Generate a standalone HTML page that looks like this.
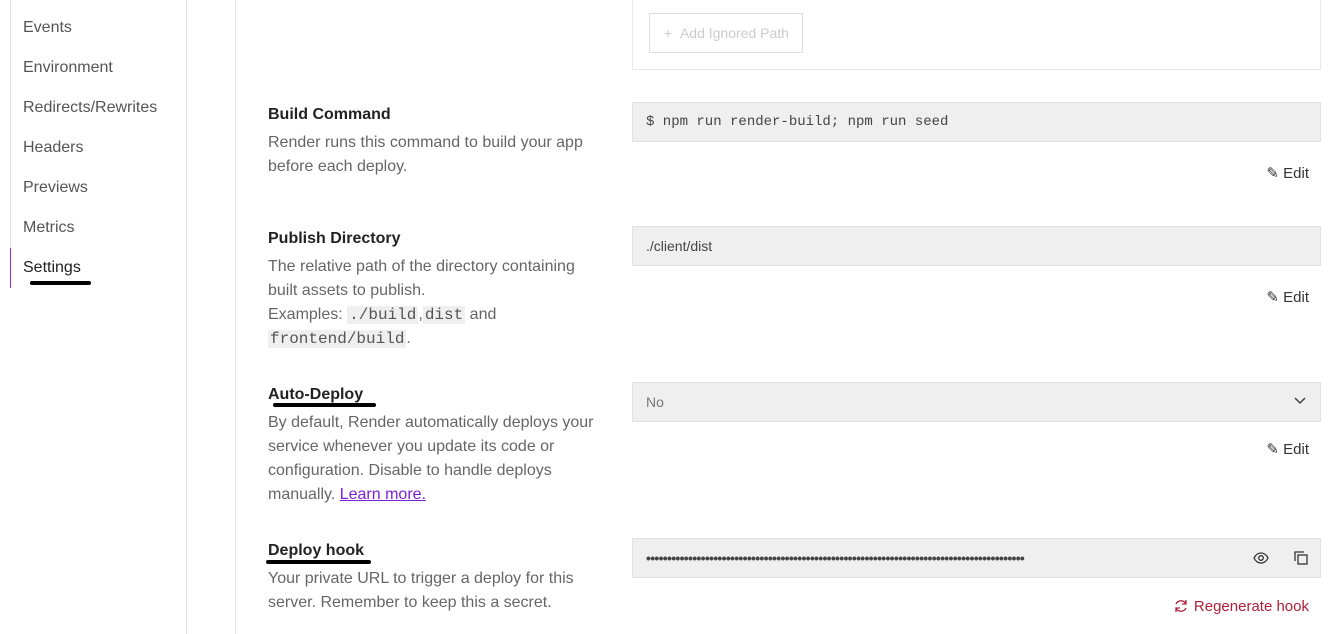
<!DOCTYPE html>
<html><head><meta charset="utf-8"><style>
*{margin:0;padding:0;box-sizing:border-box}
body{width:1328px;height:634px;overflow:hidden;background:#fff;font-family:"Liberation Sans",sans-serif;position:relative;color:#555}
.a{position:absolute;white-space:nowrap}
.nav{left:23px;font-size:16px;color:#555;line-height:20px}
.h{left:268px;font-size:16px;font-weight:bold;color:#222;line-height:20px}
.p{left:268px;font-size:16px;color:#666;line-height:24px}
.box{position:absolute;left:632px;width:689px;height:40px;background:#efefef;border:1px solid #e3e3e3;font-size:14px;color:#444;padding:0 13px;line-height:38px}
.edit{right:19px;font-size:15px;color:#333;line-height:20px}
code{font-family:"Liberation Mono",monospace;background:#efefef;font-size:16px;color:#555;padding:0 2px}
.mark{position:absolute;height:4px;background:#000;border-radius:3px}
</style></head><body>
<div style="position:absolute;left:10px;top:0;width:1px;height:248px;background:#e5e5e5"></div>
<div style="position:absolute;left:10px;top:248px;width:1px;height:40px;background:#8a2be2"></div>
<div style="position:absolute;left:186px;top:0;width:1px;height:634px;background:#e5e5e5"></div>
<div style="position:absolute;left:235px;top:0;width:1px;height:634px;background:#e5e5e5"></div>
<div class="a nav" style="top:18px">Events</div>
<div class="a nav" style="top:58px">Environment</div>
<div class="a nav" style="top:98px">Redirects/Rewrites</div>
<div class="a nav" style="top:138px">Headers</div>
<div class="a nav" style="top:178px">Previews</div>
<div class="a nav" style="top:218px">Metrics</div>
<div class="a nav" style="top:258px;color:#222">Settings</div>
<div class="mark" style="left:30px;top:281px;width:61px"></div>

<div style="position:absolute;left:632px;top:-2px;width:689px;height:72px;border:1px solid #e8e8e8"></div>
<div style="position:absolute;left:649px;top:13px;width:154px;height:40px;border:1px solid #e0e0e0;color:#ccc;font-size:14px;line-height:38px;padding-left:14px">+&nbsp;&nbsp;Add Ignored Path</div>

<div class="a h" style="top:105px">Build Command</div>
<div class="a p" style="top:131px">Render runs this command to build your app<br>before each deploy.</div>
<div class="box" style="top:102px;font-family:'Liberation Mono',monospace;font-size:14px">$ npm run render-build; npm run seed</div>
<div class="a edit" style="top:164px">✎ Edit</div>

<div class="a h" style="top:229px">Publish Directory</div>
<div class="a p" style="top:255px">The relative path of the directory containing<br>built assets to publish.<br>Examples: <code>./build</code>,<code>dist</code> and<br><code>frontend/build</code>.</div>
<div class="box" style="top:226px">./client/dist</div>
<div class="a edit" style="top:288px">✎ Edit</div>

<div class="a h" style="top:385px">Auto-Deploy</div>
<div class="mark" style="left:273px;top:403px;width:103px"></div>
<div class="a p" style="top:411px">By default, Render automatically deploys your<br>service whenever you update its code or<br>configuration. Disable to handle deploys<br>manually. <span style="color:#7b1fd8;text-decoration:underline">Learn more.</span></div>
<div class="box" style="top:382px;color:#777">No<svg style="position:absolute;right:14px;top:14px" width="12" height="8" viewBox="0 0 12 8"><path d="M1 1l5 5 5-5" fill="none" stroke="#444" stroke-width="1.5"/></svg></div>
<div class="a edit" style="top:440px">✎ Edit</div>

<div class="a h" style="top:541px">Deploy hook</div>
<div class="mark" style="left:266px;top:560px;width:105px"></div>
<div class="a p" style="top:567px">Your private URL to trigger a deploy for this<br>server. Remember to keep this a secret.</div>
<div class="box" style="top:538px;letter-spacing:-0.7px;font-weight:bold">••••••••••••••••••••••••••••••••••••••••••••••••••••••••••••••••••••••••••••••••••••••••••
<svg style="position:absolute;right:51px;top:13px" width="16" height="12" viewBox="0 0 16 12"><path d="M1 6C3 2 6 1 8 1s5 1 7 5c-2 4-5 5-7 5S3 10 1 6z" fill="none" stroke="#333" stroke-width="1.3"/><circle cx="8" cy="6" r="2.3" fill="none" stroke="#333" stroke-width="1.3"/></svg>
<svg style="position:absolute;right:12px;top:12px" width="14" height="14" viewBox="0 0 14 14"><path d="M1 10V1h9" fill="none" stroke="#333" stroke-width="1.3"/><rect x="4" y="4" width="9" height="9" fill="none" stroke="#333" stroke-width="1.3"/></svg></div>
<div class="a" style="right:19px;top:597px;font-size:15px;color:#b0203a;line-height:20px"><svg width="14" height="14" viewBox="0 0 14 14" style="vertical-align:-2px;margin-right:6px"><path d="M12 5A5.5 5.5 0 0 0 2 5M2 9a5.5 5.5 0 0 0 10 0M12 1v4H8M2 13V9h4" fill="none" stroke="#b0203a" stroke-width="1.3"/></svg>Regenerate hook</div>
</body></html>
